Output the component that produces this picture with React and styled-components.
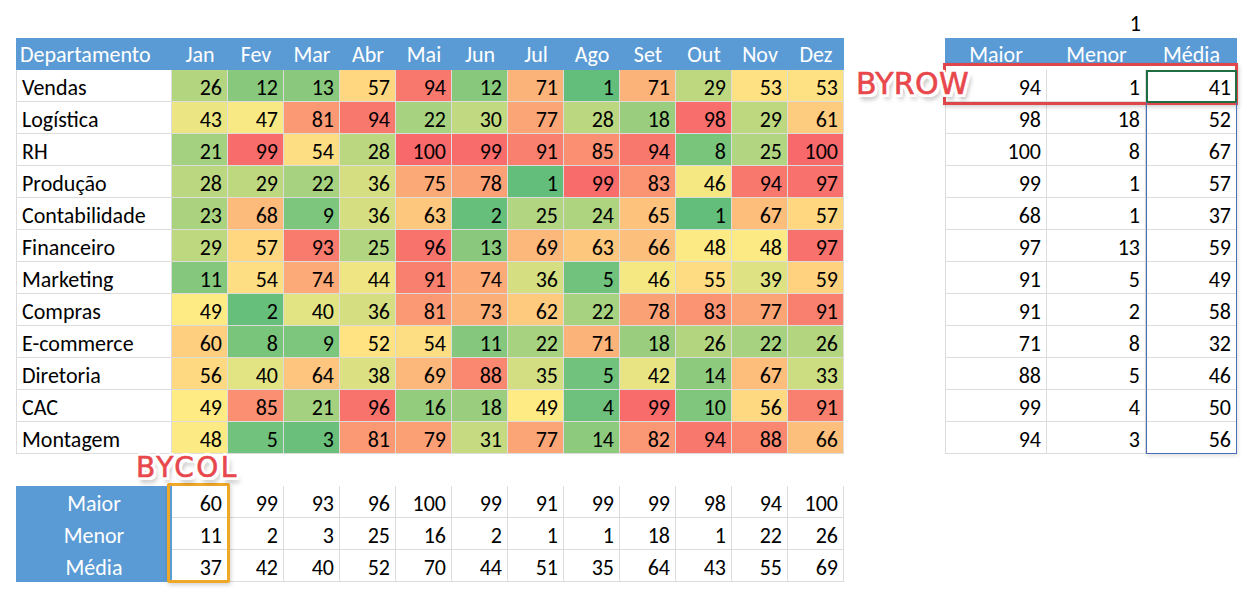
import React from "react";
import styled, { createGlobalStyle } from "styled-components";

const Global = createGlobalStyle`
  html, body { margin: 0; padding: 0; background: #ffffff; }
  body { font-family: Carlito, Lato, "Liberation Sans", sans-serif; }
`;

const months = ["Jan","Fev","Mar","Abr","Mai","Jun","Jul","Ago","Set","Out","Nov","Dez"];
const rows = [
  ["Vendas",[26,12,13,57,94,12,71,1,71,29,53,53]],
  ["Logística",[43,47,81,94,22,30,77,28,18,98,29,61]],
  ["RH",[21,99,54,28,100,99,91,85,94,8,25,100]],
  ["Produção",[28,29,22,36,75,78,1,99,83,46,94,97]],
  ["Contabilidade",[23,68,9,36,63,2,25,24,65,1,67,57]],
  ["Financeiro",[29,57,93,25,96,13,69,63,66,48,48,97]],
  ["Marketing",[11,54,74,44,91,74,36,5,46,55,39,59]],
  ["Compras",[49,2,40,36,81,73,62,22,78,83,77,91]],
  ["E-commerce",[60,8,9,52,54,11,22,71,18,26,22,26]],
  ["Diretoria",[56,40,64,38,69,88,35,5,42,14,67,33]],
  ["CAC",[49,85,21,96,16,18,49,4,99,10,56,91]],
  ["Montagem",[48,5,3,81,79,31,77,14,82,94,88,66]],
];
const byRow = [[94,1,41],[98,18,52],[100,8,67],[99,1,57],[68,1,37],[97,13,59],[91,5,49],[91,2,58],[71,8,32],[88,5,46],[99,4,50],[94,3,56]];
const byCol = [
  ["Maior",[60,99,93,96,100,99,91,99,99,98,94,100]],
  ["Menor",[11,2,3,25,16,2,1,1,18,1,22,26]],
  ["Média",[37,42,40,52,70,44,51,35,64,43,55,69]],
];

const all = rows.flatMap(r => r[1]).slice().sort((a,b)=>a-b);
const vMin = all[0], vMax = all[all.length-1];
const vMid = (all[all.length/2 - 1] + all[all.length/2]) / 2;
const G = [99,190,123], Y = [255,235,132], R = [248,105,107];
const mix = (a,b,t) => a.map((x,i)=>Math.round(x + (b[i]-x)*t));
const heat = v => {
  const c = v <= vMid ? mix(G, Y, (v - vMin) / (vMid - vMin)) : mix(Y, R, (v - vMid) / (vMax - vMid));
  return `rgb(${c[0]},${c[1]},${c[2]})`;
};

const Page = styled.div`
  display: flex;
  align-items: flex-start;
  padding: 6px 0 0 16px;
  width: 1247px;
  height: 592px;
  box-sizing: border-box;
  overflow: hidden;
  color: #000;
`;

const LeftCol = styled.div`
  display: flex;
  flex-direction: column;
  padding-top: 32px;
  gap: 32px;
`;

const Grid = styled.div`
  display: grid;
  grid-template-columns: 156px repeat(12, 56px);
  grid-auto-rows: 32px;
  font-size: 22px;
`;

const Cell = styled.div`
  box-sizing: border-box;
  display: flex;
  align-items: center;
  padding: 3px 5px 0;
  white-space: nowrap;
  border-right: 1px solid #dcdcdc;
  border-bottom: 1px solid #dcdcdc;
  ${p => p.$first ? "border-left: 1px solid #dcdcdc;" : ""}
  justify-content: ${p => p.$align === "left" ? "flex-start" : "flex-end"};
  background: ${p => p.$bg || "#ffffff"};
`;

const HeadCell = styled.div`
  box-sizing: border-box;
  display: flex;
  align-items: center;
  justify-content: ${p => p.$align === "left" ? "flex-start" : "center"};
  padding: 1px 4px 0;
  background: #5b9bd5;
  color: #ffffff;
  white-space: nowrap;
`;

const LabelCell = styled.div`
  box-sizing: border-box;
  display: flex;
  align-items: center;
  justify-content: center;
  padding-top: 2px;
  background: #5b9bd5;
  color: #ffffff;
`;

const SummaryWrap = styled.div`
  position: relative;
`;

const OrangeBox = styled.div`
  position: absolute;
  left: 151px;
  top: -3px;
  width: 63px;
  height: 100px;
  box-sizing: border-box;
  border: 3px solid #f0a828;
  border-radius: 2px;
  box-shadow: 1px 2px 4px rgba(0,0,0,0.18);
  pointer-events: none;
`;

const Callout = styled.div`
  position: absolute;
  font-family: "DejaVu Sans", sans-serif;
  color: #e8474c;
  -webkit-text-stroke: 0.6px #e8474c;
  white-space: nowrap;
  line-height: 1;
  pointer-events: none;
  text-shadow:
    3px 0 0 #fff, -3px 0 0 #fff, 0 3px 0 #fff, 0 -3px 0 #fff,
    2px 2px 0 #fff, -2px -2px 0 #fff, 2px -2px 0 #fff, -2px 2px 0 #fff,
    3px 3px 0 #fff, -3px 3px 0 #fff,
    3px 5px 5px rgba(0,0,0,0.4);
`;

const ByCol = styled(Callout)`
  left: 120px;
  top: -32px;
  font-size: 28px;
  letter-spacing: 2.5px;
`;

const ByRow = styled(Callout)`
  left: -89px;
  top: 31px;
  font-size: 30px;
  letter-spacing: 0.3px;
`;

const RightCol = styled.div`
  display: flex;
  flex-direction: column;
  margin-left: 101px;
`;

const NoteRow = styled.div`
  display: grid;
  grid-template-columns: 102px 99px 91px;
  height: 32px;
  font-size: 22px;
`;

const NoteCell = styled.div`
  grid-column: 2;
  display: flex;
  align-items: center;
  justify-content: flex-end;
  padding: 2px 5px 0;
`;

const RightWrap = styled.div`
  position: relative;
`;

const RightGrid = styled.div`
  display: grid;
  grid-template-columns: 102px 99px 91px;
  grid-template-rows: 25px 7px repeat(12, 32px);
  font-size: 22px;
`;

const RightHead = styled(HeadCell)`
  align-items: flex-end;
  line-height: 22px;
  padding: 0 4px;
  justify-content: center;
`;

const HeadText = styled.span`
  display: block;
  margin-bottom: -3px;
`;

const Spacer = styled.div`
  grid-column: 1 / -1;
`;

const RedBox = styled.div`
  position: absolute;
  left: -2px;
  top: 25px;
  width: 295px;
  height: 42px;
  box-sizing: border-box;
  border: 3px solid #e0474b;
  box-shadow: 1px 2px 4px rgba(0,0,0,0.18);
  pointer-events: none;
`;

const ActiveCell = styled.div`
  position: absolute;
  left: 201px;
  top: 32px;
  width: 91px;
  height: 33px;
  box-sizing: border-box;
  border: 2px solid #1f6e43;
  pointer-events: none;
`;

const SelectBox = styled.div`
  position: absolute;
  left: 201px;
  top: 64px;
  width: 91px;
  height: 352px;
  box-sizing: border-box;
  border: 1.5px solid #4a6fb8;
  border-top: none;
  box-shadow: 1px 2px 4px rgba(0,0,0,0.12);
  pointer-events: none;
`;

export default function App() {
  return (
    <>
      <Global />
      <Page>
        <LeftCol>
          <Grid>
            <HeadCell $align="left">Departamento</HeadCell>
            {months.map(m => <HeadCell key={m}>{m}</HeadCell>)}
            {rows.map(([name, vals]) => (
              <React.Fragment key={name}>
                <Cell $first $align="left">{name}</Cell>
                {vals.map((v, i) => <Cell key={i} $bg={heat(v)}>{v}</Cell>)}
              </React.Fragment>
            ))}
          </Grid>
          <SummaryWrap>
            <Grid>
              {byCol.map(([label, vals]) => (
                <React.Fragment key={label}>
                  <LabelCell>{label}</LabelCell>
                  {vals.map((v, i) => <Cell key={i}>{v}</Cell>)}
                </React.Fragment>
              ))}
            </Grid>
            <OrangeBox />
            <ByCol>BYCOL</ByCol>
          </SummaryWrap>
        </LeftCol>
        <RightCol>
          <NoteRow>
            <NoteCell>1</NoteCell>
          </NoteRow>
          <RightWrap>
            <RightGrid>
              <RightHead><HeadText>Maior</HeadText></RightHead>
              <RightHead><HeadText>Menor</HeadText></RightHead>
              <RightHead><HeadText>Média</HeadText></RightHead>
              <Spacer />
              {byRow.map((r, ri) => (
                <React.Fragment key={ri}>
                  {r.map((v, i) => <Cell key={i} $first={i === 0}>{v}</Cell>)}
                </React.Fragment>
              ))}
            </RightGrid>
            <RedBox />
            <ActiveCell />
            <SelectBox />
            <ByRow>BYROW</ByRow>
          </RightWrap>
        </RightCol>
      </Page>
    </>
  );
}
